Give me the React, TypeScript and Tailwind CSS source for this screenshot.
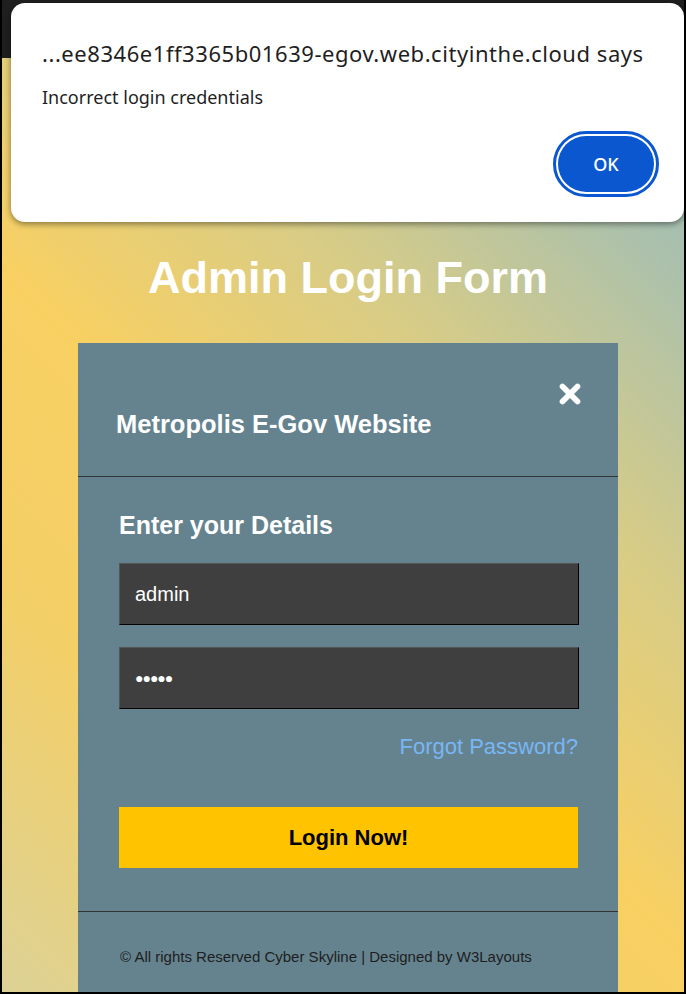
import { X } from 'lucide-react';

function AlertDialog() {
  return (
    <div className="absolute left-[11px] top-[3px] w-[673px] h-[219px] rounded-[14px] bg-white shadow-[0_2px_6px_rgba(0,0,0,0.45)] font-['Noto_Sans',sans-serif]">
      <div className="pl-[31px] pt-[35px] text-[22px] leading-[30px] text-[#1f1f1f] tracking-[0.55px]">
        ...ee8346e1ff3365b01639-egov.web.cityinthe.cloud says
      </div>
      <div className="pl-[31px] pt-[16px] text-[18px] leading-[26px] text-[#1f1f1f]">
        Incorrect login credentials
      </div>
      <div className="absolute right-[25px] top-[128px] rounded-full border-[3px] border-[#0b57d0] p-[2px]">
        <button className="w-[96px] h-[56px] rounded-full bg-[#0b57d0] text-white text-[18px] font-medium">
          OK
        </button>
      </div>
    </div>
  );
}

function App() {
  return (
    <div className="relative w-[686px] h-[994px] overflow-hidden bg-black p-[2px] pt-0 font-['Liberation_Sans',Arial,sans-serif]">
      <div className="h-[58px] bg-[#1f1f1f]" />
      <div className="h-[934px] bg-[linear-gradient(225deg,#92b9bf_0%,#b0c2a8_16%,#d8cc86_34%,#f8d062_55%,#f3cf67_75%,#dcd296_100%)] overflow-hidden">
        <h1 className="pt-[194px] pl-[10px] text-center text-white font-bold text-[45px] leading-[52px]">
          Admin Login Form
        </h1>
        <div className="mt-[39px] ml-[76px] w-[540px] bg-[#65838f] h-[700px]">
          <div className="relative h-[134px] border-b border-[#333]">
            <div className="absolute left-[38px] top-[67px] text-white font-bold text-[25.5px] leading-[28px]">
              Metropolis E-Gov Website
            </div>
            <X className="absolute right-[33px] top-[36px] w-[30px] h-[30px] text-white" strokeWidth={4.5} />
          </div>
          <div className="pl-[41px] pr-[39px] pt-[34px] pb-[43px]">
            <div className="text-white font-bold text-[25px] leading-[28px]">Enter your Details</div>
            <div className="mt-[24px] h-[62px] bg-[#3f3f3f] border border-t-[#555] border-l-[#555] border-b-black border-r-black flex items-center pl-[15px] text-white text-[20px]">
              admin
            </div>
            <div className="mt-[22px] h-[62px] bg-[#3f3f3f] border border-t-[#555] border-l-[#555] border-b-black border-r-black flex items-center pl-[15px] text-white text-[14px] tracking-[-1px]">
              ●●●●●
            </div>
            <div className="mt-[25px] text-right pr-[1px] text-[22px] leading-[26px] text-[#78b6f4]">
              Forgot Password?
            </div>
            <button className="mt-[47px] w-[459px] h-[61px] bg-[#ffc300] text-black font-bold text-[22px]">
              Login Now!
            </button>
          </div>
          <div className="border-t border-[#333] px-[42px] pt-[34px] text-[15px] text-[#1e1e1e]">
            © All rights Reserved Cyber Skyline | Designed by W3Layouts
          </div>
        </div>
      </div>
      <AlertDialog />
    </div>
  );
}

export default App;
